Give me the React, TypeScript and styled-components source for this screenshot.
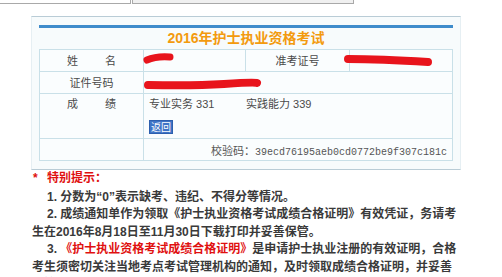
import styled, { createGlobalStyle } from "styled-components";

const GlobalStyle = createGlobalStyle`
  html, body {
    margin: 0;
    padding: 0;
    background: #fff;
  }
  body {
    font-family: "Liberation Sans", "Noto Sans CJK SC", sans-serif;
    color: #444;
  }
`

type Stroke = {
  d: string;
  width: number;
}

const App: React.FC = () => {
  return (
    <>
      <GlobalStyle />
      <StyledTopStrip>
        <StyledTopTab $width={131} />
        <StyledTopTab $width={222} $shaded />
      </StyledTopStrip>
      <StyledPanel>
        <StyledBlueBar />
        <StyledTitle>2016年护士执业资格考试</StyledTitle>
        <StyledTable>
          <colgroup>
            <col style={{ width: 104 }} />
            <col style={{ width: 102 }} />
            <col style={{ width: 104 }} />
            <col style={{ width: 103 }} />
          </colgroup>
          <tbody>
            <tr>
              <StyledLabel><StyledSpread><span>姓</span><span>名</span></StyledSpread></StyledLabel>
              <StyledValue>
                <Scribble d="M 3 6 Q 12 2 26 3" width={7} />
              </StyledValue>
              <StyledLabel>准考证号</StyledLabel>
              <StyledValue>
                <Scribble d="M -2 5 Q 30 5 78 8" width={8} />
              </StyledValue>
            </tr>
            <tr>
              <StyledLabel>证件号码</StyledLabel>
              <StyledValue colSpan={3}>
                <Scribble d="M 4 9 Q 50 10 80 8 T 113 7" width={8} />
              </StyledValue>
            </tr>
            <tr>
              <StyledLabel $top><StyledSpread><span>成</span><span>绩</span></StyledSpread></StyledLabel>
              <StyledValue colSpan={3} $top>
                <StyledScores>
                  <StyledScore>专业实务 331</StyledScore>
                  <StyledScore>实践能力 339</StyledScore>
                </StyledScores>
                <StyledBackButton>返回</StyledBackButton>
              </StyledValue>
            </tr>
            <tr>
              <StyledLabel />
              <StyledCode colSpan={3}>
                校验码：<StyledMono>39ecd76195aeb0cd0772be9f307c181c</StyledMono>
              </StyledCode>
            </tr>
          </tbody>
        </StyledTable>
      </StyledPanel>
      <StyledNotes>
        <StyledNotesHead><StyledStar>*</StyledStar>特别提示：</StyledNotesHead>
        <StyledNote>1. 分数为“0”表示缺考、违纪、不得分等情况。</StyledNote>
        <StyledNote>2. 成绩通知单作为领取《护士执业资格考试成绩合格证明》有效凭证，务请考生在2016年8月18日至11月30日下载打印并妥善保管。</StyledNote>
        <StyledNote>3. <StyledRed>《护士执业资格考试成绩合格证明》</StyledRed>是申请护士执业注册的有效证明，合格考生须密切关注当地考点考试管理机构的通知，及时领取成绩合格证明，并妥善保管。</StyledNote>
      </StyledNotes>
    </>
  );
}

// red marker stroke drawn over the blanked values
const Scribble: React.FC<Stroke> = ({ d, width }) => (
  <StyledScribble viewBox="0 0 120 14" width={120} height={14}>
    <path d={d} stroke="#e8141c" strokeWidth={width} strokeLinecap="round" fill="none" />
  </StyledScribble>
)

export default App;

const StyledTopStrip = styled.div`
  display: flex;
  gap: 1px;
  height: 4px;
`

const StyledTopTab = styled.div<{ $width: number; $shaded?: boolean }>`
  box-sizing: border-box;
  width: ${p => p.$width}px;
  height: 4px;
  border-bottom: 1px solid #a9a9a9;
  border-right: 1px solid #a9a9a9;
  border-left: ${p => p.$shaded ? "1px solid #a9a9a9" : "none"};
  background: ${p => p.$shaded ? "#f0f0f0" : "#fff"};
`

const StyledPanel = styled.div`
  box-sizing: border-box;
  width: 430px;
  margin: 12px 0 0 31px;
  padding: 8px 7px 8px 7px;
  background: #f7fbfc;
  border-top: 1px solid #b9ccd6;
  border-bottom: 1px solid #b9ccd6;
  border-left: 1px solid #e6eff3;
  border-right: 1px solid #e6eff3;
`

const StyledBlueBar = styled.div`
  height: 3px;
  background: #3f8ccb;
`

const StyledTitle = styled.div`
  height: 21px;
  line-height: 21px;
  text-align: center;
  font-size: 14px;
  font-weight: bold;
  color: #f39a0e;
`

const StyledTable = styled.table`
  width: 413px;
  table-layout: fixed;
  border-collapse: collapse;
  background: #fafdfe;
  font-size: 11px;
  color: #4a4a4a;
`

const StyledLabel = styled.td<{ $top?: boolean }>`
  height: 21px;
  padding: ${p => p.$top ? "3px 0 0" : "0"};
  border: 1px solid #c9e0e8;
  text-align: center;
  vertical-align: ${p => p.$top ? "top" : "middle"};
  line-height: 14px;
`

const StyledSpread = styled.span`
  display: inline-flex;
  gap: 27px;
`

const StyledValue = styled.td<{ $top?: boolean }>`
  position: relative;
  height: ${p => p.$top ? "41px" : "21px"};
  padding: ${p => p.$top ? "3px 5px 0" : "0 5px"};
  border: 1px solid #c9e0e8;
  vertical-align: ${p => p.$top ? "top" : "middle"};
  line-height: 14px;
  white-space: nowrap;
`

const StyledScribble = styled.svg`
  position: absolute;
  left: 0;
  top: 4px;
  overflow: visible;
`

const StyledScores = styled.div`
  display: flex;
`

const StyledScore = styled.span`
  width: 97px;
`

const StyledBackButton = styled.button`
  display: block;
  margin-top: 9px;
  padding: 0 1px;
  height: 14px;
  border: 1px solid #2d5fae;
  background: #3e74c6;
  color: #fff;
  font-family: "Noto Sans CJK SC", sans-serif;
  font-size: 10px;
  line-height: 12px;
`

const StyledCode = styled.td`
  height: 21px;
  padding: 0 5px;
  border: 1px solid #c9e0e8;
  text-align: right;
  color: #555;
  white-space: nowrap;
`

const StyledMono = styled.span`
  font-family: "Liberation Mono", monospace;
  font-size: 10px;
`

const StyledNotes = styled.div`
  width: 426px;
  margin-left: 32px;
  font-size: 12px;
  line-height: 17.5px;
  color: #3a3a3a;
  font-weight: bold;
`

const StyledNotesHead = styled.div`
  color: #e01010;
  margin-bottom: 1px;
`

const StyledStar = styled.span`
  display: inline-block;
  width: 14px;
  padding-left: 1px;
`

const StyledNote = styled.p`
  margin: 0;
  text-indent: 15px;
`

const StyledRed = styled.span`
  color: #e01010;
`
